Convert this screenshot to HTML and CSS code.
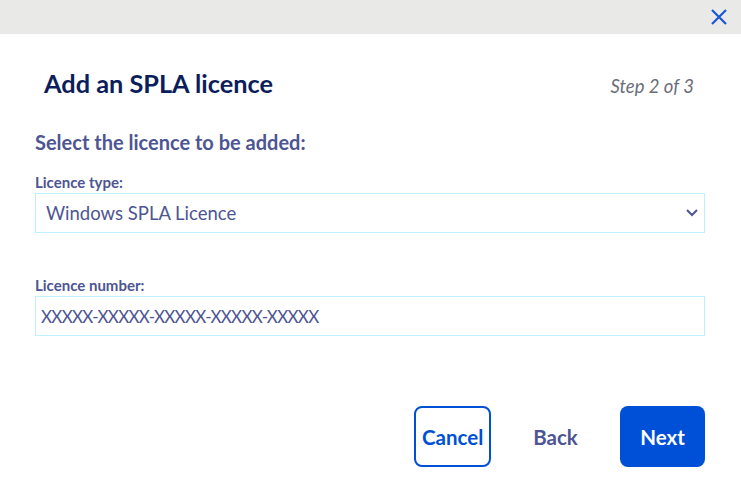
FILE: index.html
```html
<!DOCTYPE html>
<html lang="en">
<head>
  <meta charset="UTF-8">
  <title>Add an SPLA licence</title>
  <link rel="stylesheet" href="styles.css">
</head>
<body>
  <div class="topbar">
    <button class="close" aria-label="Close">
      <svg width="18" height="18" viewBox="0 0 18 18"><path d="M2 2 L16 16 M16 2 L2 16" stroke="#1a56d6" stroke-width="2.2" fill="none"/></svg>
    </button>
  </div>

  <div class="content">
    <div class="header">
      <h1>Add an SPLA licence</h1>
      <span class="step">Step 2 of 3</span>
    </div>

    <h2>Select the licence to be added:</h2>

    <label class="label">Licence type:</label>
    <div class="select">
      <span>Windows SPLA Licence</span>
      <svg width="12" height="8" viewBox="0 0 12 8"><path d="M1 1 L6 6 L11 1" stroke="#4d5592" stroke-width="2" fill="none"/></svg>
    </div>

    <label class="label label-number">Licence number:</label>
    <input class="input" type="text" value="XXXXX-XXXXX-XXXXX-XXXXX-XXXXX">

    <div class="actions">
      <button class="btn btn-cancel">Cancel</button>
      <button class="btn btn-back">Back</button>
      <button class="btn btn-next">Next</button>
    </div>
  </div>
</body>
</html>
```

FILE: styles.css
```css
body { margin: 0; font-family: Lato, "Open Sans", sans-serif; background: #fff; color: #4d5592; }
.topbar { height: 34px; background: #e9eae8; display: flex; justify-content: flex-end; align-items: center; padding-right: 12px; }
.close { border: 0; background: none; padding: 0; width: 20px; height: 20px; display: flex; align-items: center; justify-content: center; }
.content { padding: 0 36px 0 35px; }
.header { display: flex; justify-content: space-between; align-items: baseline; padding: 34px 11px 0 9px; }
h1 { margin: 0; font-size: 25.3px; line-height: 30px; font-weight: 700; color: #0b1d5a; }
.step { font-size: 18.5px; font-style: italic; color: #6b6e7a; }
h2 { margin: 33px 0 0; font-size: 20px; line-height: 22px; font-weight: 700; color: #4d5592; }
.label { display: block; margin-top: 20px; font-size: 15px; line-height: 18px; font-weight: 700; color: #4d5592; }
.label-number { margin-top: 43px; }
.select { box-sizing: border-box; height: 40px; margin-top: 2px; border: 1px solid #bef1ff; display: flex; align-items: center; justify-content: space-between; padding: 0 6px 0 10px; font-size: 18.5px; }
.input { box-sizing: border-box; display: block; width: 100%; height: 40px; margin-top: 2px; border: 1px solid #bef1ff; padding: 0 5px; font-family: inherit; font-size: 17px; letter-spacing: -0.7px; color: #4d5592; outline: none; }
.actions { display: flex; justify-content: flex-end; align-items: center; gap: 20px; margin-top: 70px; }
.btn { box-sizing: border-box; height: 61px; border-radius: 8px; font-family: inherit; font-size: 20.5px; font-weight: 700; border: 2px solid transparent; background: none; }
.btn-cancel { width: 77px; border-color: #0050d7; color: #0050d7; }
.btn-back { width: 89px; color: #4d5592; }
.btn-next { width: 85px; background: #0050d7; color: #fff; }
```
